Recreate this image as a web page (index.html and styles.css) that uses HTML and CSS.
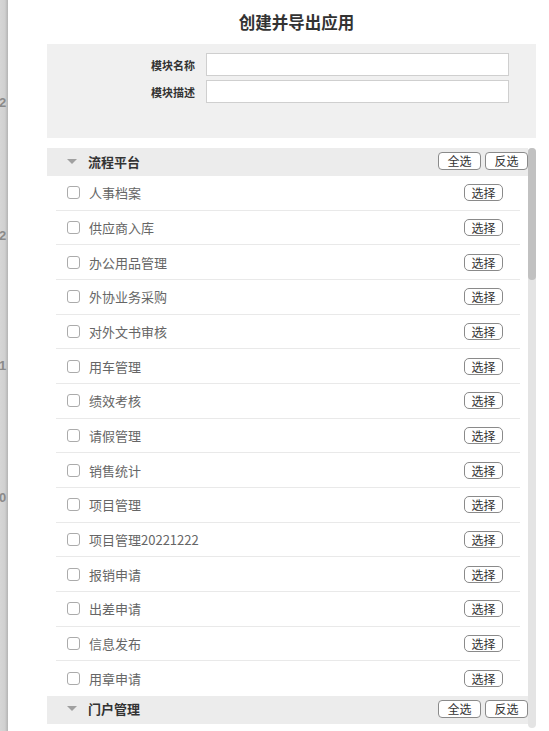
FILE: index.html
```html
<!DOCTYPE html>
<html lang="zh-CN">
<head>
<meta charset="utf-8">
<title>创建并导出应用</title>
<link rel="stylesheet" href="styles.css">
</head>
<body>
<div class="page">
  <div class="backdrop">
    <span class="bg-num b1">2</span>
    <span class="bg-num b2">2</span>
    <span class="bg-num b3">1</span>
    <span class="bg-num b4">0</span>
  </div>
  <div class="modal">
    <h1 class="title">创建并导出应用</h1>
    <div class="form-panel">
      <div class="form-row">
        <label class="form-label">模块名称</label>
        <input class="form-input" type="text">
      </div>
      <div class="form-row">
        <label class="form-label">模块描述</label>
        <input class="form-input" type="text">
      </div>
    </div>
    <div class="list-wrap">
      <div class="list-scroll">
        <div class="group">
          <div class="group-head">
            <span class="caret"></span>
            <span class="group-name">流程平台</span>
            <span class="group-actions"><button class="btn-sm">全选</button><button class="btn-sm">反选</button></span>
          </div>
          <div class="item"><span class="check"></span><span class="item-name">人事档案</span><button class="btn-pick">选择</button></div>
          <div class="item"><span class="check"></span><span class="item-name">供应商入库</span><button class="btn-pick">选择</button></div>
          <div class="item"><span class="check"></span><span class="item-name">办公用品管理</span><button class="btn-pick">选择</button></div>
          <div class="item"><span class="check"></span><span class="item-name">外协业务采购</span><button class="btn-pick">选择</button></div>
          <div class="item"><span class="check"></span><span class="item-name">对外文书审核</span><button class="btn-pick">选择</button></div>
          <div class="item"><span class="check"></span><span class="item-name">用车管理</span><button class="btn-pick">选择</button></div>
          <div class="item"><span class="check"></span><span class="item-name">绩效考核</span><button class="btn-pick">选择</button></div>
          <div class="item"><span class="check"></span><span class="item-name">请假管理</span><button class="btn-pick">选择</button></div>
          <div class="item"><span class="check"></span><span class="item-name">销售统计</span><button class="btn-pick">选择</button></div>
          <div class="item"><span class="check"></span><span class="item-name">项目管理</span><button class="btn-pick">选择</button></div>
          <div class="item"><span class="check"></span><span class="item-name">项目管理20221222</span><button class="btn-pick">选择</button></div>
          <div class="item"><span class="check"></span><span class="item-name">报销申请</span><button class="btn-pick">选择</button></div>
          <div class="item"><span class="check"></span><span class="item-name">出差申请</span><button class="btn-pick">选择</button></div>
          <div class="item"><span class="check"></span><span class="item-name">信息发布</span><button class="btn-pick">选择</button></div>
          <div class="item"><span class="check"></span><span class="item-name">用章申请</span><button class="btn-pick">选择</button></div>
        </div>
        <div class="group">
          <div class="group-head">
            <span class="caret"></span>
            <span class="group-name">门户管理</span>
            <span class="group-actions"><button class="btn-sm">全选</button><button class="btn-sm">反选</button></span>
          </div>
        </div>
      </div>
      <div class="scrollbar"><div class="thumb"></div></div>
    </div>
  </div>
</div>
</body>
</html>
```
FILE: styles.css
```css
* { box-sizing: border-box; }
html, body { margin: 0; padding: 0; }
body {
  font-family: "Noto Sans CJK SC", "Noto Sans", sans-serif;
  background: #d3d3d3;
  width: 549px;
  height: 731px;
  overflow: hidden;
}
.page {
  display: flex;
  height: 731px;
}
.backdrop {
  position: relative;
  width: 8px;
  flex: 0 0 8px;
  background: linear-gradient(to right, #d6d6d6 0, #d0d0d0 5px, #bcbcbc 7px, #b5b5b5 8px);
  overflow: hidden;
}
.bg-num {
  position: absolute;
  left: -1px;
  font-family: "Liberation Sans", sans-serif;
  font-size: 13px;
  font-weight: bold;
  color: #8a8a8a;
}
.b1 { top: 95px; }
.b2 { top: 228px; }
.b3 { top: 358px; }
.b4 { top: 490px; }
.modal {
  flex: 1;
  background: #fff;
  height: 731px;
  display: flex;
  flex-direction: column;
  padding: 0 13px 3px 39px;
}
.title {
  margin: 0 -9px 0 0;
  height: 44px;
  line-height: 45px;
  font-size: 16.5px;
  font-weight: bold;
  color: #333;
  text-align: center;
  padding-left: 1px;
}
.form-panel {
  background: #f0f0f0;
  height: 94px;
  padding: 9px 0 0 0;
  display: flex;
  flex-direction: column;
  gap: 4px;
}
.form-row {
  display: flex;
  align-items: center;
  height: 23px;
}
.form-label {
  width: 159px;
  text-align: right;
  font-size: 11px;
  font-weight: bold;
  color: #333;
  padding-right: 11px;
}
.form-input {
  width: 303px;
  height: 23px;
  border: 1px solid #cfcfcf;
  background: #fff;
  outline: none;
  padding: 0 4px;
}
.list-wrap {
  margin-top: 10px;
  height: 580px;
  display: flex;
}
.list-scroll {
  flex: 1;
  overflow: hidden;
}
.scrollbar {
  width: 8px;
  flex: 0 0 8px;
  background: #e4e4e4;
  border-radius: 4px;
  display: flex;
  flex-direction: column;
}
.thumb {
  height: 132px;
  background: #c1c1c1;
  border-radius: 4px;
}
.group-head {
  height: 28px;
  background: #ececec;
  display: flex;
  align-items: center;
  padding-left: 20px;
  padding-bottom: 2px;
}
.caret {
  width: 0;
  height: 0;
  border-left: 5px solid transparent;
  border-right: 5px solid transparent;
  border-top: 5px solid #a0a0a0;
  margin-right: 11px;
}
.group-name {
  font-size: 13px;
  font-weight: bold;
  color: #333;
  flex: 1;
}
.group-actions {
  display: flex;
  gap: 4px;
}
.btn-sm {
  width: 43px;
  height: 18px;
  padding: 0;
  border: 1px solid #8a8a8a;
  border-radius: 4px;
  background: #fff;
  font-family: "Noto Sans CJK SC", sans-serif;
  font-size: 12px;
  line-height: 16px;
  color: #333;
}
.item {
  height: 34.67px;
  margin: 0 8px 0 9px;
  border-bottom: 1px solid #e9e9e9;
  display: flex;
  align-items: center;
  padding: 0 17px 0 11px;
}
.item:last-child { border-bottom: none; }
.check {
  width: 13px;
  height: 13px;
  border: 1px solid #ababab;
  border-radius: 3px;
  background: #fff;
  margin-right: 9px;
}
.item-name {
  flex: 1;
  font-size: 13px;
  color: #666;
}
.btn-pick {
  width: 39px;
  height: 17px;
  padding: 0;
  border: 1px solid #8a8a8a;
  border-radius: 5px;
  background: #fff;
  font-family: "Noto Sans CJK SC", sans-serif;
  font-size: 12px;
  line-height: 15px;
  color: #333;
}
```
